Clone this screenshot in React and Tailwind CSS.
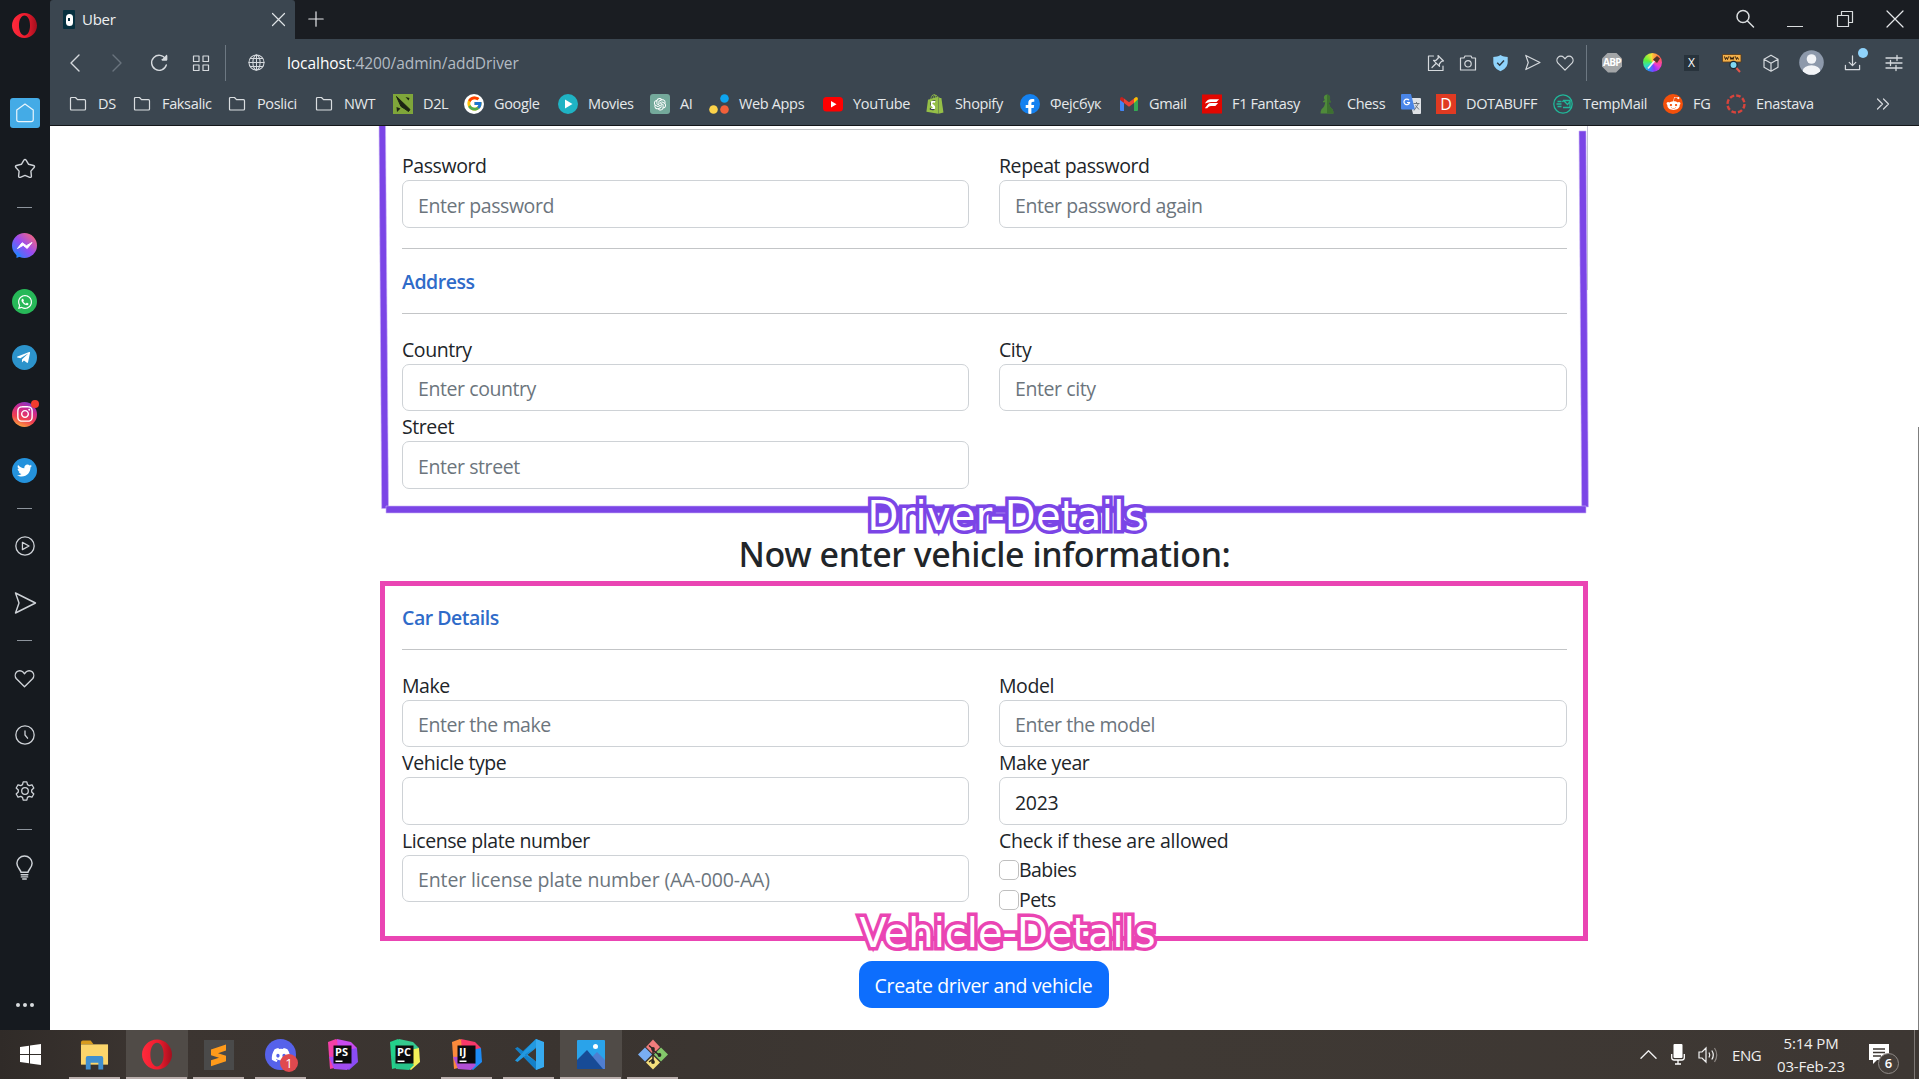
import { FaFacebookMessenger, FaWhatsapp, FaTelegramPlane, FaInstagram, FaTwitter, FaDiscord, FaShopify, FaFacebookF, FaRedditAlien } from "react-icons/fa";
import { FcGoogle } from "react-icons/fc";
import { AiOutlineOpenAI } from "react-icons/ai";

/* ---------- shared line icon ---------- */
function Line({ size = 22, w = 1.4, color = "#cfd3d8", children, vb = 24 }) {
  return (
    <svg width={size} height={size} viewBox={`0 0 ${vb} ${vb}`} fill="none" stroke={color} strokeWidth={w} strokeLinecap="round" strokeLinejoin="round">
      {children}
    </svg>
  );
}

const heart = <path d="M12 20.6 3.6 12.2C1.9 10.3 1.9 7.2 3.7 5.3c1.9-1.9 4.9-1.9 6.8 0L12 7l1.5-1.7c1.9-1.9 4.9-1.9 6.8 0 1.8 1.9 1.8 5 .1 6.9z" />;
const plane = <path d="M2.5 2 22.5 12 2.5 22 6 12z" />;

/* ---------- sidebar ---------- */
function SideItem({ children }) {
  return <div className="flex h-[56.2px] w-full shrink-0 items-center justify-center">{children}</div>;
}
function Dash() {
  return (
    <div className="flex h-[20px] w-full shrink-0 items-center justify-center">
      <div className="h-px w-[15px] bg-[#8d949c]" />
    </div>
  );
}
function Bubble({ className, children }) {
  return <div className={`relative flex size-[25px] items-center justify-center rounded-full text-white ${className}`}>{children}</div>;
}

function Opera({ id, className }) {
  return (
    <svg className={className} viewBox="0 0 24 24">
      <defs>
        <linearGradient id={id} x1="0" y1="0" x2="1" y2="0">
          <stop offset="0" stopColor="#ff2a3c" />
          <stop offset="0.55" stopColor="#ee1c2e" />
          <stop offset="1" stopColor="#a30f1e" />
        </linearGradient>
      </defs>
      <path fillRule="evenodd" fill={`url(#${id})`} d="M12 0C5.4 0 0 5.4 0 12s5.400 12 12 12 12-5.400 12-12S18.600 0 12 0zm0 2.500c3.200 0 5.300 4.200 5.300 9.500s-2.100 9.500-5.300 9.500S6.700 17.300 6.700 12 8.800 2.500 12 2.500z" />
    </svg>
  );
}

function Sidebar() {
  return (
    <aside className="flex w-[50px] shrink-0 flex-col items-center bg-[#161a1f] pr-px">
      <div className="flex h-[85px] w-full shrink-0 justify-center pt-[13px]">
        <Opera id="operaSide" className="size-[25px]" />
      </div>
      <SideItem>
        <div className="flex size-[30px] items-center justify-center rounded-[3px] bg-[#44abe6]">
          <Line size={22} w={1.3} color="#e9f5fc">
            <path d="M12 2.200 21 8.800v10.400q0 2.300-2.300 2.300H5.300Q3 21.500 3 19.200V8.800z" />
          </Line>
        </div>
      </SideItem>
      <SideItem>
        <Line size={24}>
          <path d="M10.900 3.200q1.100-1.500 2.200 0l2.500 4.100 4.900 1.200q1.700.6.600 2l-3.200 3.600.5 5q-.1 1.700-1.700 1.200L12 18.400l-4.700 1.900q-1.600.5-1.700-1.200l.5-5-3.200-3.600q-1.100-1.400.6-2l4.900-1.200z" />
        </Line>
      </SideItem>
      <Dash />
      <SideItem>
        <Bubble className="bg-[linear-gradient(45deg,#2a80ff_10%,#9a4bf0_50%,#ff6a70_95%)]">
          <svg width="25" height="25" viewBox="0 0 25 25" overflow="visible">
            <path d="M4.500 18v7l5-2z" fill="#2a80ff" />
            <path d="m5.500 15.500 4.600-5.800 4.300 3 5.600-3.200-4.800 6-4-3.200z" fill="#fff" stroke="#fff" strokeWidth="1" strokeLinejoin="round" />
          </svg>
        </Bubble>
      </SideItem>
      <SideItem>
        <Bubble className="bg-[#27b858]"><FaWhatsapp size={16} /></Bubble>
      </SideItem>
      <SideItem>
        <Bubble className="bg-[#2c93cb]"><FaTelegramPlane size={15} className="mr-0.5" /></Bubble>
      </SideItem>
      <SideItem>
        <Bubble className="bg-[linear-gradient(20deg,#fdb53c_5%,#f0404f_35%,#cf2a8e_65%,#7a3ad0_95%)]">
          <FaInstagram size={18} />
          <span className="absolute -top-0.5 -right-0.5 size-2 rounded-full bg-[#f23c2e]" />
        </Bubble>
      </SideItem>
      <SideItem>
        <Bubble className="bg-[#2492dc]"><FaTwitter size={15} /></Bubble>
      </SideItem>
      <Dash />
      <SideItem>
        <Line size={22}>
          <circle cx="12" cy="12" r="10" />
          <path d="m9.200 8 7.200 4-7.200 4z" />
        </Line>
      </SideItem>
      <SideItem><Line size={24}>{plane}</Line></SideItem>
      <Dash />
      <SideItem><Line size={23}>{heart}</Line></SideItem>
      <SideItem>
        <Line size={22}>
          <circle cx="12" cy="12" r="10" />
          <path d="M12 7.500V12l2.800 3.500" />
        </Line>
      </SideItem>
      <SideItem>
        <Line size={22}>
          <path d="M10 2h4l.7 3 1.900 1.100 3-.9 2 3.500-2.300 2.200v2.200l2.300 2.200-2 3.500-3-.9-1.900 1.100-.7 3h-4l-.7-3-1.900-1.100-3 .9-2-3.500 2.300-2.200v-2.200L2.400 8.700l2-3.500 3 .9L9.300 5z" />
          <circle cx="12" cy="12" r="3.600" />
        </Line>
      </SideItem>
      <Dash />
      <SideItem>
        <Line size={25}>
          <path d="M8.500 16.500c0-2.500-3.800-4.200-3.800-8.500C4.700 4.200 7.900 1 12 1s7.300 3.200 7.300 7c0 4.300-3.800 6-3.800 8.500zM8.800 18.900h6.400M9 21h6M10.300 23h3.400" />
        </Line>
      </SideItem>
      <div className="mt-auto flex h-[50px] items-center gap-[3px]">
        <span className="size-1 rounded-full bg-[#d8dbde]" />
        <span className="size-1 rounded-full bg-[#d8dbde]" />
        <span className="size-1 rounded-full bg-[#d8dbde]" />
      </div>
    </aside>
  );
}

/* ---------- tab strip ---------- */
function TabStrip() {
  return (
    <div className="flex h-[39px] shrink-0 items-center bg-[#1a1d22]">
      <div className="flex h-full w-[245px] items-center rounded-tr-[3px] rounded-tl-[3px] bg-[#3b4650] pl-[13px] pr-[9px]">
        <div className="flex h-[19px] w-[12px] items-center justify-center rounded-[1px] bg-[#06303f]">
          <div className="flex h-[12px] w-[7px] items-center justify-center rounded-full bg-white">
            <div className="size-[2.500px] bg-[#06303f]" />
          </div>
        </div>
        <span className="ml-[7px] text-[15px] tracking-[-0.3px] text-[#eef0f2]">Uber</span>
        <div className="ml-auto">
          <Line size={15} vb={15} w={1.2} color="#dfe3e6"><path d="m1.500 1.500 12 12m0-12-12 12" /></Line>
        </div>
      </div>
      <div className="-mt-px ml-[13px]">
        <Line size={16} vb={16} w={1.2} color="#e5e7e9"><path d="M8 .8v14.400M.8 8h14.400" /></Line>
      </div>
      <div className="ml-auto flex items-center pb-0.5">
        <div className="w-[50px]">
          <Line size={20} vb={20} w={1.5} color="#dadddf"><circle cx="8" cy="7.500" r="6" /><path d="m12.500 12 6 6" /></Line>
        </div>
        <div className="w-[51px] pt-[15px]">
          <div className="ml-0.5 h-[1px] w-[16px] bg-[#dadddf]" />
        </div>
        <div className="w-[50px]">
          <Line size={18} vb={18} w={1.2} color="#dadddf"><path d="M1.500 5.500h11v11h-11zM5.500 5.200V1.500h11v11h-3.700" /></Line>
        </div>
        <div className="w-[33px]">
          <Line size={18} vb={18} w={1.2} color="#e5e7e9"><path d="m1 1 16 16m0-16L1 17" /></Line>
        </div>
      </div>
    </div>
  );
}

/* ---------- address bar ---------- */
function Slot({ className, children }) {
  return <div className={`flex shrink-0 items-center justify-center ${className}`}>{children}</div>;
}

function AddressBar() {
  const c = "#d5d9dd";
  return (
    <div className="flex h-[47px] shrink-0 items-center bg-[#3b4650]">
      <Slot className="ml-[4px] w-[42px]"><Line size={18} vb={18} color={c}><path d="M13 1 5 9l8 8" /></Line></Slot>
      <Slot className="w-[42px]"><Line size={18} vb={18} color="#69737d"><path d="m5 1 8 8-8 8" /></Line></Slot>
      <Slot className="w-[42px]">
        <Line size={18} vb={18} color={c}><path d="M15.600 5A7.500 7.500 0 1 0 16.300 11M16.500 1.500v4.300h-4.300" /><path d="M16.500 2v3.800h-4z" fill={c} /></Line>
      </Slot>
      <Slot className="w-[42px]">
        <Line size={18} vb={18} w={1.2} color={c}><path d="M1.500 2h5.500v5.500H1.500zM11 2h5.500v5.500H11zM1.500 11h5.500v5.500H1.500zM11 11h5.500v5.500H11z" /></Line>
      </Slot>
      <div className="ml-[3px] h-[36px] w-px bg-[#6d7882]" />
      <Slot className="ml-[21px] w-[18px]">
        <Line size={17} vb={18} w={1.1} color={c}>
          <circle cx="9" cy="9" r="8" /><ellipse cx="9" cy="9" rx="3.800" ry="8" /><path d="M9 1v16M1 9h16M2.500 4.700h13M2.500 13.300h13" />
        </Line>
      </Slot>
      <span className="ml-[22px] pt-[2px] whitespace-nowrap text-[15.500px] tracking-[-0.06px] text-[#b3bbc3]"><span className="text-white">localhost</span>:4200/admin/addDriver</span>

      <div className="ml-auto flex items-center">
        <Slot className="w-[33px]">
          <Line size={18} vb={18} w={1.2} color={c}><path d="M6.500 2H1.500v14.500H16V12M11 1.500l5.500 5.500-2 .3-2.200 2.700.2 2.300-6-6 2.300.2 2.500-2.500zM9 9.500 5 13.500" /></Line>
        </Slot>
        <Slot className="w-[32px]">
          <Line size={18} vb={18} w={1.2} color={c}><path d="M1.500 4H5l1-2h6l1 2h3.500v12h-15z" /><circle cx="9" cy="9.800" r="3.200" /></Line>
        </Slot>
        <Slot className="w-[32px]">
          <svg width="17" height="18" viewBox="0 0 17 17"><path d="M8.500.5c2.300 1.400 4.700 1.900 7.200 2v5.300c0 4.500-3.600 7.500-7.200 8.900-3.600-1.400-7.200-4.400-7.200-8.900V2.500c2.500-.1 4.900-.6 7.200-2z" fill="#8fd3fb" /><path d="m5.200 8.200 2.500 2.500 4.300-4.700" fill="none" stroke="#2f3a44" strokeWidth="1.500" /></svg>
        </Slot>
        <Slot className="w-[33px]"><Line size={17} w={1.7} color={c}>{plane}</Line></Slot>
        <Slot className="w-[32px]"><Line size={20} w={1.5} color={c}>{heart}</Line></Slot>
        <div className="ml-[5px] h-[36px] w-px bg-[#6d7882]" />
        <Slot className="ml-[5px] w-[40px]">
          <div className="flex size-5 items-center justify-center bg-[#a3a6a8] text-[10px] font-bold tracking-[-0.6px] text-white [clip-path:polygon(30%_0,70%_0,100%_30%,100%_70%,70%_100%,30%_100%,0_70%,0_30%)]">ABP</div>
        </Slot>
        <Slot className="w-[40px]">
          <div className="relative size-[19px] rounded-full bg-[conic-gradient(from_0deg,#ffc23a,#ff5a4d_60deg,#f03ccf_120deg,#8a35ff_165deg,#2b8bff_205deg,#2fe0c0_240deg,#5cf03a_290deg,#ffe23a)]">
            <svg className="absolute inset-0" width="19" height="19" viewBox="0 0 19 19"><path d="M5 15.500 11.500 8" stroke="#f2f2f2" strokeWidth="1.800" /><path d="m10 6.500 4 3.500 3-4.500-3-2.500z" fill="#503328" /></svg>
          </div>
        </Slot>
        <Slot className="w-[39px]">
          <div className="flex h-[16px] w-[15px] items-center justify-center bg-[#28333c] text-[12px] leading-none text-white">X</div>
        </Slot>
        <Slot className="w-[41px]">
          <svg width="20" height="20" viewBox="0 0 20 20">
            <path d="M.5 1.500h18.500v7.500H.5z" fill="#f3b04a" stroke="#5b3a16" strokeWidth=".8" />
            <path d="m2.500 3.500 1 3 1-2 1 2 1-3m1.500 0 1 3 1-2 1 2 1-3m1.500 0 1 3 1-2 1 2" fill="none" stroke="#2d1c0b" strokeWidth="1" />
            <path d="m13.500 14 4.500 5" stroke="#e2564a" strokeWidth="2" />
            <circle cx="11.500" cy="12" r="3.600" fill="#7fd8f3" stroke="#1c2a33" strokeWidth="1.200" />
          </svg>
        </Slot>
        <Slot className="w-[38px]">
          <Line size={18} vb={18} w={1.2} color={c}><path d="m9 1.200 7 4v8l-7 4-7-4v-8zM2 5.200l7 4 7-4M9 9.200v8" /></Line>
        </Slot>
        <Slot className="ml-[1px] w-[41px]">
          <svg width="25" height="25" viewBox="0 0 25 25">
            <defs><clipPath id="avatarClip"><circle cx="12.500" cy="12.500" r="12.300" /></clipPath></defs>
            <circle cx="12.500" cy="12.500" r="12.300" fill="#8d99ab" />
            <g clipPath="url(#avatarClip)" fill="#f2f4f7"><circle cx="12.500" cy="9" r="4.800" /><ellipse cx="12.500" cy="21" rx="8.800" ry="5.800" /></g>
          </svg>
        </Slot>
        <Slot className="relative w-[41px]">
          <Line size={17} vb={18} w={1.3} color={c}><path d="M9 2v10m-3.500-3.200L9 12.300l3.500-3.500M1.500 12v4.500h15V12" /></Line>
          <span className="absolute -top-1.5 right-[5px] size-[10px] rounded-full bg-[#8fd3fb]" />
        </Slot>
        <Slot className="mr-[4px] w-[42px]">
          <Line size={18} vb={18} w={1.3} color={c}><path d="M1 4h16M1 9h16M1 14h16M12 1.500v5M5.500 6.500v5M11 11.500v5" /></Line>
        </Slot>
      </div>
    </div>
  );
}

/* ---------- bookmarks ---------- */
const Folder = () => <Line size={18} vb={18} w={1.2} color="#d9dde0"><path d="M1.500 3.500q0-1 1-1h4l2 2.200h7q1 0 1 1V14q0 1-1 1h-13q-1 0-1-1z" /></Line>;

const ICONS = {
  d2l: (
    <svg width="20" height="20" viewBox="0 0 20 20"><path d="M0 0h20v20H0z" fill="#7fa63a" /><path d="m3.500 2.500 13.500 13-1.500 2-3.500-2.500-4-2.500z" fill="#1d2413" stroke="#1d2413" strokeWidth="1" /><path d="m12.500 3 4 1-1 2.500zM3.500 13l4 1.500L4 18z" fill="#1d2413" /></svg>
  ),
  google: <div className="flex size-5 items-center justify-center rounded-full bg-white"><FcGoogle size={17} /></div>,
  movies: (
    <svg width="20" height="20" viewBox="0 0 20 20"><circle cx="10" cy="10" r="10" fill="#1fb3c4" /><path d="m7 5.500 7.500 4.500L7 14.500z" fill="#fff" /></svg>
  ),
  ai: <div className="flex size-5 items-center justify-center rounded-[3px] bg-[#74a99b] text-white"><AiOutlineOpenAI size={16} /></div>,
  web: (
    <svg width="20" height="20" viewBox="0 0 20 20"><circle cx="15.500" cy="4.500" r="4.300" fill="#0ea5f0" /><circle cx="4.500" cy="15.500" r="4.300" fill="#fcd34a" /><circle cx="15.500" cy="15.500" r="4.300" fill="#f2603a" /></svg>
  ),
  youtube: (
    <svg width="20" height="20" viewBox="0 0 20 20"><rect y="3" width="20" height="14.500" rx="3.500" fill="#f00" /><path d="m8 7 5.500 3.200L8 13.500z" fill="#fff" /></svg>
  ),
  shopify: (
    <div className="relative">
      <svg className="absolute inset-0" width="20" height="20" viewBox="0 0 20 20"><path d="m6 7 6 0-1 8-5 0z" fill="#fff" /></svg>
      <FaShopify className="relative" size={20} color="#95bf47" />
    </div>
  ),
  facebook: <div className="flex size-5 items-end justify-center overflow-hidden rounded-full bg-[#1481f0] text-white"><FaFacebookF size={16} className="translate-y-px" /></div>,
  gmail: (
    <svg width="18" height="14" viewBox="0 0 18 14"><path d="M0 2v11q0 1 1 1h3V5z" fill="#4285f4" /><path d="M18 2v11q0 1-1 1h-3V5z" fill="#34a853" /><path d="M14 1.500 16 0q2 0 2 2.200L14 6z" fill="#fbbc04" /><path d="M4 6V1.500L9 5.300l5-3.800V6L9 9.800z" fill="#ea4335" /><path d="M0 2.200Q0 0 2 0l2 1.500V6L0 3z" fill="#c5221f" /></svg>
  ),
  f1: (
    <svg width="21" height="20" viewBox="0 0 21 20"><path d="M0 0h21v20H0z" fill="#e10600" /><path d="M3 9.500q2.500-4.500 6-4.500h9l-2.800 2.800H9.500Q7 7.800 3 9.500zM3 14.500 6.500 10q1-1 3-1H17l-3 3h-4.500q-1.500 0-2.500 1l-1.500 1.500z" fill="#fff" /></svg>
  ),
  chess: (
    <svg width="16" height="20" viewBox="0 0 16 20"><path d="M8 .5a3.200 3.200 0 0 1 2.200 5.500l1.800 1.200v1H9.800q.3 4.300 3.700 7Q14.500 17 14.500 19.500h-13q0-2.500 1-4.300 3.400-2.700 3.700-7H4v-1L5.800 6A3.200 3.200 0 0 1 8 .5z" fill="#4f8a3a" /><path d="M8 .5a3.200 3.200 0 0 1 2.200 5.500l1.800 1.200v1H9.800q.3 4.300 3.700 7Q14.500 17 14.500 19.500H8z" fill="#3d7030" /></svg>
  ),
  translate: (
    <svg width="20" height="20" viewBox="0 0 20 20"><path d="M8 4h11q1 0 1 1v14q0 1-1 1h-7z" fill="#dfe2e6" /><path d="M1 0h9l4 15.500H1q-1 0-1-1V1q0-1 1-1z" fill="#4a86e8" /><path d="M12.500 9.500h6M15.500 8v1.500m-2.500 7 4.500-7m-3 2 3.500 4" fill="none" stroke="#6d7680" strokeWidth="1" /><path d="M8 6.200A2.800 2.800 0 1 0 8.500 8.500H6" fill="none" stroke="#fff" strokeWidth="1.200" /></svg>
  ),
  dotabuff: <div className="flex size-5 items-center justify-center bg-[#e03a22] text-[16px] leading-none text-white">D</div>,
  tempmail: (
    <svg width="20" height="20" viewBox="0 0 20 20" fill="none" stroke="#20b89a" strokeWidth="1.300"><circle cx="10" cy="10" r="9.200" /><path d="M10 13.500h7v-7h-6.500L9.500 8M11 7l3.500 3.500L17.500 7M4.500 7.500h4M3.500 10h5M4.500 12.500h4" /></svg>
  ),
  reddit: <div className="flex size-5 items-center justify-center rounded-full bg-[#f4500b] text-white"><FaRedditAlien size={15} /></div>,
  enastava: (
    <svg width="20" height="20" viewBox="0 0 20 20"><circle cx="10" cy="10" r="8.500" fill="none" stroke="#d8443c" strokeWidth="2.400" strokeDasharray="4.600 2.070" /></svg>
  ),
};

const BOOKMARKS = [
  ["DS", null, "w-[64px]"],
  ["Faksalic", null, "w-[95px]"],
  ["Poslici", null, "w-[87px]"],
  ["NWT", null, "w-[79px]"],
  ["D2L", "d2l", "w-[71px]"],
  ["Google", "google", "w-[94px]"],
  ["Movies", "movies", "w-[92px]"],
  ["AI", "ai", "w-[59px]"],
  ["Web Apps", "web", "w-[114px]"],
  ["YouTube", "youtube", "w-[102px]"],
  ["Shopify", "shopify", "w-[95px]"],
  ["Фејсбук", "facebook", "w-[99px]"],
  ["Gmail", "gmail", "w-[83px]"],
  ["F1 Fantasy", "f1", "w-[115px]"],
  ["Chess", "chess", "w-[84px]"],
  ["", "translate", "w-[35px]"],
  ["DOTABUFF", "dotabuff", "w-[117px]"],
  ["TempMail", "tempmail", "w-[110px]"],
  ["FG", "reddit", "w-[63px]"],
  ["Enastava", "enastava", "w-[100px]"],
];

function Bookmarks() {
  return (
    <div className="flex h-[40px] shrink-0 items-center border-b border-[#14171a] bg-[#3b4650] pb-[4px] pl-[18px]">
      {BOOKMARKS.map(([label, icon, width], i) => (
        <div key={i} className={`flex shrink-0 items-center gap-[10px] ${width}`}>
          <span className="flex w-5 shrink-0 justify-center">{icon ? ICONS[icon] : <Folder />}</span>
          <span className="whitespace-nowrap text-[14.500px] leading-5 tracking-[-0.35px] text-[#e6e9eb]">{label}</span>
        </div>
      ))}
      <div className="mr-[29px] ml-auto">
        <Line size={14} vb={14} w={1.2} color="#d5d9dd"><path d="m1.500 2 5 5-5 5M7.500 2l5 5-5 5" /></Line>
      </div>
    </div>
  );
}

/* ---------- form ---------- */
function Rule() {
  return <div className="h-px w-full bg-[#c3c5c7]" />;
}
function Field({ label, placeholder, value, tracking = "tracking-[-0.42px]" }) {
  return (
    <div className="flex flex-col">
      <label className="h-[30px] text-[19.500px] leading-[32px] tracking-[-0.42px] text-[#212529]">{label}</label>
      <div className={`flex h-[47.500px] items-center rounded-[7px] border border-[#ced2d6] bg-white px-[15px] pt-[2px] text-[19.500px] ${tracking} ${value ? "text-[#212529]" : "text-[#6c757d]"}`}>{value || placeholder}</div>
    </div>
  );
}
function Check({ label }) {
  return (
    <label className="flex h-[30px] items-center text-[19.500px] leading-[30px] tracking-[-0.55px] text-[#212529]">
      <span className="size-5 rounded-[5px] border border-[#bfbfbf] bg-white" />
      <span className="pt-px">{label}</span>
    </label>
  );
}
function SectionTitle({ children }) {
  return <h6 className="h-6 text-[19.500px] leading-[26px] font-semibold tracking-[-0.48px] text-[#2f6bc9]">{children}</h6>;
}

function Page() {
  return (
    <main className="relative flex-1 overflow-hidden bg-white">
      <div className="ml-[352px] w-[1165px] pt-[3.400px]">
        <Rule />
        <div className="mt-5 grid grid-cols-[567px_568px] gap-x-[30px]">
          <Field label="Password" placeholder="Enter password" />
          <Field label="Repeat password" placeholder="Enter password again" />
        </div>
        <div className="mt-5"><Rule /></div>
        <div className="my-5"><SectionTitle>Address</SectionTitle></div>
        <Rule />
        <div className="mt-5 grid grid-cols-[567px_568px] gap-x-[30px]">
          <Field label="Country" placeholder="Enter country" />
          <Field label="City" placeholder="Enter city" />
          <Field label="Street" placeholder="Enter street" />
        </div>
        <h2 className="mt-[44px] text-center font-['Noto_Sans',sans-serif] text-[34px] leading-[42px] font-medium tracking-[-0.42px] text-[#212529]">Now enter vehicle information:</h2>
        <div className="mt-[30px] mb-5"><SectionTitle>Car Details</SectionTitle></div>
        <Rule />
        <div className="mt-5 grid grid-cols-[567px_568px] gap-x-[30px]">
          <Field label="Make" placeholder="Enter the make" />
          <Field label="Model" placeholder="Enter the model" />
          <Field label="Vehicle type" />
          <Field label="Make year" value="2023" tracking="tracking-[-0.3px]" />
          <Field label="License plate number" placeholder="Enter license plate number (AA-000-AA)" tracking="tracking-[-0.12px]" />
          <div className="flex flex-col">
            <span className="h-[30px] text-[19.500px] leading-[32px] tracking-[-0.28px] text-[#212529]">Check if these are allowed</span>
            <Check label="Babies" />
            <Check label="Pets" />
          </div>
        </div>
        <div className="mt-[46.500px] flex justify-center pr-[2px]">
          <button className="h-[47px] w-[250px] rounded-[13px] bg-[#0d6efd] pt-px text-[19.500px] tracking-[-0.33px] whitespace-nowrap text-white">Create driver and vehicle</button>
        </div>
      </div>

      {/* hand-drawn highlight strokes over the form */}
      <svg className="absolute top-0 left-0" width="1869" height="420" viewBox="50 126 1869 420">
        <g fill="#7b45e6" stroke="#c9b3f7" strokeWidth="0.6">
          <path d="M379 124h6.500l3 384.500h-6.800z" />
          <path d="M1579 131h7l2.400 376h-6.700z" />
          <path d="M386 506h1200v7H386z" />
        </g>
        <path d="M1587.500 126V290" stroke="#c4c4d4" strokeWidth="1" />
      </svg>
      <div className="absolute top-[455px] left-[329.500px] h-[359.500px] w-[1208.500px] border-[5px] border-[#ea45b3]" />
      <div className="absolute top-[370px] left-[817.500px] font-['DejaVu_Sans',sans-serif] text-[40px] leading-none tracking-[0.33px] whitespace-nowrap text-white [-webkit-text-stroke:7px_#7b45e6] [paint-order:stroke_fill]">Driver-Details</div>
      <div className="absolute top-[787px] left-[809.500px] font-['DejaVu_Sans',sans-serif] text-[40px] leading-none whitespace-nowrap text-white [-webkit-text-stroke:7px_#ea45b3] [paint-order:stroke_fill]">Vehicle-Details</div>
      <div className="absolute top-[301px] right-0 bottom-0 w-px bg-[#7f7f7f]" />
    </main>
  );
}

/* ---------- taskbar ---------- */
function Jet({ text, colors }) {
  return (
    <svg width="32" height="32" viewBox="0 0 32 32">
      <path d="M1 3 9 0l8 5-6 23-8 2z" fill={colors[0]} />
      <path d="m10 0 14 3 6 6-4 9-15-6z" fill={colors[1]} />
      <path d="m30 9 1 14-9 8-8-5 7-15z" fill={colors[2]} />
      <path d="m2 18 5 12 13 1 5-5-8-9z" fill={colors[3]} />
      <path d="M6.500 6.500h18v18h-18z" fill="#0b0b0d" />
      <path d="M8.500 21.500h7v1.500h-7z" fill="#fff" />
      <text x="8" y="16.500" fill="#fff" fontSize="11" fontWeight="700" fontFamily="Open Sans, sans-serif">{text}</text>
    </svg>
  );
}

const APPS = [
  ["explorer", "open", <svg width="29" height="31" viewBox="0 0 30 31"><path d="M1 3q0-2 2-2h8l3 4H1z" fill="#d79b1e" /><path d="M1 5h28v21H1z" fill="#fbd56b" /><path d="M6 31V19q0-2 2-2h14q2 0 2 2v12h-5v-7h-8v7z" fill="#3f8fd0" /></svg>],
  ["opera", "active", <Opera id="operaTask" className="h-[31px] w-[30px]" />],
  ["sublime", "open", <svg width="30" height="32" viewBox="0 0 30 32"><path d="M0 1h30v30H0z" fill="#4a4a4a" /><path d="m7 10.500 15-5v6l-8 2.800 8 2.500v5.500l-15 5v-6l8-2.500-8-2.500z" fill="#ff9a1a" /></svg>],
  ["discord", "open", <div className="relative flex size-[31px] items-center justify-center rounded-full bg-[#5662ea] text-white"><FaDiscord size={20} /><span className="absolute -right-0.5 -bottom-0.5 flex size-[18px] items-center justify-center rounded-full bg-[#e0494f] text-[13px] leading-none">1</span></div>],
  ["phpstorm", "", <Jet text="PS" colors={["#f43fa8", "#c94af0", "#8a4cf5", "#a04cf2"]} />],
  ["pycharm", "", <Jet text="PC" colors={["#23d18b", "#35c98f", "#f2ee58", "#27c48a"]} />],
  ["intellij", "open", <Jet text="IJ" colors={["#fb8a3c", "#f7386a", "#1d8cf5", "#b24fd6"]} />],
  ["vscode", "open", <svg width="30" height="31" viewBox="0 0 30 31"><path d="M22 0 9 12 3.500 8 1 9.500 22 31l7-3V3z" fill="#1480c8" /><path d="M22 8.500v14L11 15.500zM1 21.500 3.500 23 22 8V0z" fill="#2299e0" /><path d="m22 0 8 3v25l-8 3z" fill="#37abf0" /><path d="M22 9v13.500l-8.500-6.800z" fill="#3d3733" /></svg>],
  ["photos", "active", <svg width="28" height="29" viewBox="0 0 28 29"><rect width="28" height="29" rx="1" fill="#2aa3ea" /><path d="m14 18 6-6 8 8v9H14z" fill="#4f7ed0" /><path d="m0 20 10-10 16 19H0z" fill="#174b96" /><circle cx="18.500" cy="6.500" r="2.500" fill="#fff" /></svg>],
  ["git", "open", <svg width="30" height="31" viewBox="0 0 30 31"><path d="m15 .5 7 7.500-7 7-7-7z" fill="#f17c7c" /><path d="m23 8.500 7 7-7 7-7-7z" fill="#83c86a" /><path d="m7 8.500 7 7-7 7-7-7z" fill="#79aef2" /><path d="m15 16.500 7 7-7 7-7-7z" fill="#f6df7c" /><path d="M11 6.500 15 10v14M15 11l6 5M15 20l-4 3" fill="none" stroke="#2b2623" strokeWidth="1.500" /><circle cx="15" cy="10" r="1.900" fill="#2b2623" /><circle cx="21.500" cy="16" r="1.900" fill="#2b2623" /><circle cx="15" cy="23" r="1.900" fill="#2b2623" /></svg>],
];

function Taskbar() {
  return (
    <footer className="flex h-[49px] shrink-0 bg-[linear-gradient(90deg,#302b28,#3c3531_8%,#3a3430_30%,#3f3934_60%,#3d3733)]">
      <div className="flex w-[63.500px] shrink-0 items-center justify-center pr-[3px]">
        <svg width="21" height="21" viewBox="0 0 21 21" fill="#fff"><path d="M0 3l9-1.300V10H0zM10 1.500 21 0v10H10zM0 11h9v8.300L0 18zM10 11h11v10l-11-1.500z" /></svg>
      </div>
      {APPS.map(([name, state, icon]) => (
        <div key={name} className={`relative flex w-[62px] shrink-0 items-center justify-center ${state === "active" ? "bg-[#504b47]" : ""}`}>
          {icon}
          {state && <div className={`absolute bottom-0 h-[2px] bg-[#b9aeac] ${state === "active" ? "w-[61px]" : "w-[51px]"}`} />}
        </div>
      ))}
      <div className="ml-auto flex items-center text-[15px] text-white">
        <div className="mr-[-1px] ml-px"><Line size={17} vb={18} w={1.4} color="#f2f2f2"><path d="m1 13 8-8 8 8" /></Line></div>
        <svg className="ml-[15px]" width="14" height="21" viewBox="0 0 14 21"><rect x="2.500" y="0" width="9" height="14" rx="1" fill="#fff" /><path d="M.7 10v3.500q0 2.500 2.500 2.500h7.600q2.500 0 2.500-2.500V10M7 16v4M4 20h6" fill="none" stroke="#fff" strokeWidth="1.300" /></svg>
        <svg className="ml-[13px]" width="21" height="18" viewBox="0 0 21 18" fill="none" stroke="#f2f2f2" strokeWidth="1.200"><path d="M1 6h3l4-4v14l-4-4H1zM11 6.500q1.500 2.500 0 5M13.800 4.500q3 4.500 0 9" /><path d="M16.500 2q4.500 7 0 14" stroke="#8d8783" /></svg>
        <span className="ml-[13px] w-[29px] pt-px tracking-[-0.4px] text-[#f0efee]">ENG</span>
        <div className="ml-[12px] flex w-[76px] flex-col items-center text-[15px] leading-[23px] tracking-[-0.15px] text-[#f0efee]">
          <span>5:14 PM</span>
          <span>03-Feb-23</span>
        </div>
        <div className="relative ml-[20px] size-[21px]">
          <svg width="21" height="21" viewBox="0 0 21 21"><path d="M0 0h20v16H8l-4 4v-4H0z" fill="#fff" /><path d="M4 5h12M4 8.500h12M4 12h8" stroke="#3d3733" strokeWidth="1.300" /></svg>
          <span className="absolute top-[9px] left-[9px] flex size-[21px] items-center justify-center rounded-full border border-[#8f8a87] bg-[#443e3a] text-[13px] leading-none font-semibold">6</span>
        </div>
        <div className="ml-[24px] h-full w-px bg-[#7d7875]" />
        <div className="w-[4px]" />
      </div>
    </footer>
  );
}

export default function App() {
  return (
    <div className="flex h-[1079px] w-[1919px] flex-col overflow-hidden font-['Open_Sans','Noto_Sans',sans-serif]">
      <div className="flex h-[1030px]">
        <Sidebar />
        <div className="flex min-w-0 flex-1 flex-col">
          <TabStrip />
          <AddressBar />
          <Bookmarks />
          <Page />
        </div>
      </div>
      <Taskbar />
    </div>
  );
}
